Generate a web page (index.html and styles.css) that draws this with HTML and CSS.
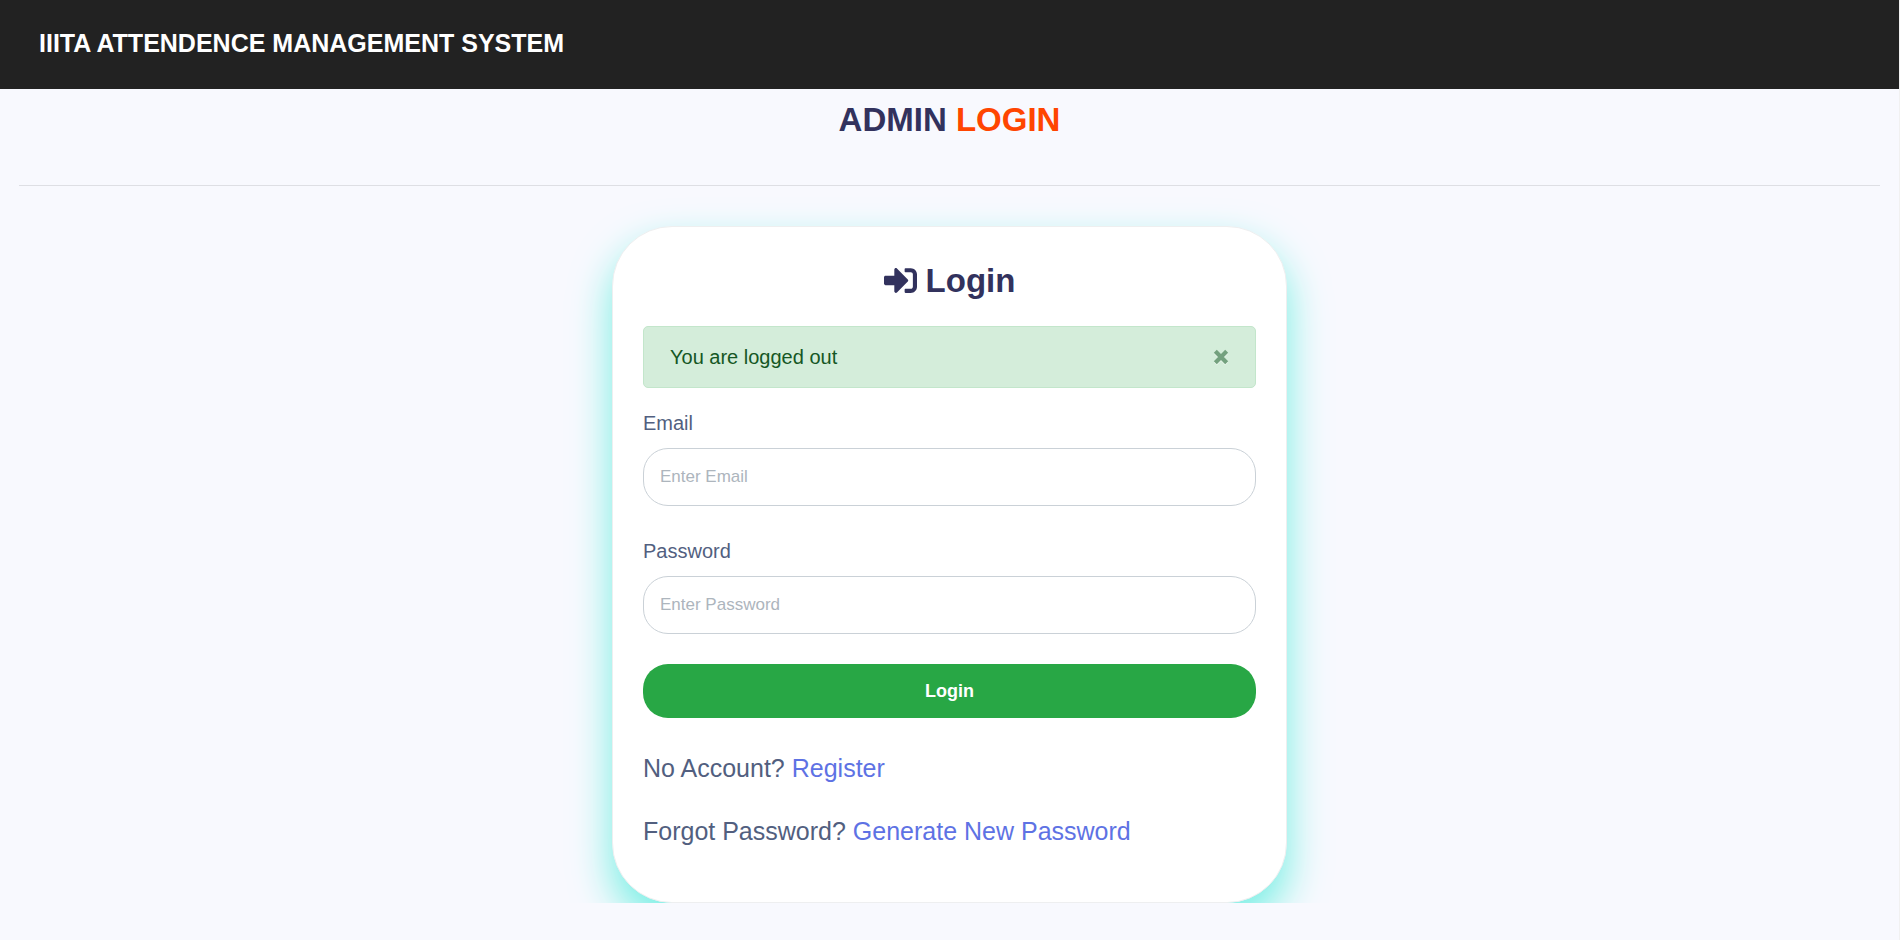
FILE: index.html
```html
<!DOCTYPE html>
<html lang="en">
<head>
<meta charset="utf-8">
<title>Admin Login</title>
<link rel="stylesheet" href="styles.css">
</head>
<body>
<header class="navbar">
  <a class="brand" href="#">IIITA ATTENDENCE MANAGEMENT SYSTEM</a>
</header>
<main class="page">
  <h1 class="page-title">ADMIN <span class="accent">LOGIN</span></h1>
  <hr class="divider">
  <section class="login-area">
    <div class="card">
      <h2 class="card-title">
        <svg class="title-icon" viewBox="0 0 512 512" aria-hidden="true"><path fill="currentColor" d="M416 448h-84c-6.600 0-12-5.400-12-12v-40c0-6.600 5.400-12 12-12h84c17.700 0 32-14.300 32-32V160c0-17.700-14.300-32-32-32h-84c-6.600 0-12-5.400-12-12V76c0-6.600 5.400-12 12-12h84c53 0 96 43 96 96v192c0 53-43 96-96 96zm-47-209L201 71c-15-15-41-4.500-41 17v96H24c-13.300 0-24 10.700-24 24v96c0 13.300 10.700 24 24 24h136v96c0 21.500 26 32 41 17l168-168c9.300-9.400 9.300-24.600 0-34z"/></svg>
        Login
      </h2>
      <div class="alert" role="alert">
        <span>You are logged out</span>
        <button class="alert-close" type="button" aria-label="Close">
          <svg class="close-icon" viewBox="0 0 16 16" aria-hidden="true"><path d="M2.300 2.300L13.700 13.700M13.700 2.300L2.300 13.700" fill="none" stroke="currentColor" stroke-width="4.200"/></svg>
        </button>
      </div>
      <form class="login-form">
        <div class="field">
          <label class="field-label" for="email">Email</label>
          <input class="field-input" id="email" type="email" placeholder="Enter Email">
        </div>
        <div class="field">
          <label class="field-label" for="password">Password</label>
          <input class="field-input" id="password" type="password" placeholder="Enter Password">
        </div>
        <button class="submit" type="submit">Login</button>
      </form>
      <p class="note">No Account? <a class="link" href="#">Register</a></p>
      <p class="note">Forgot Password? <a class="link" href="#">Generate New Password</a></p>
    </div>
  </section>
</main>
</body>
</html>
```
FILE: styles.css
```css
* {
  box-sizing: border-box;
}

body {
  margin: 0;
  min-height: 100vh;
  border-right: 1px solid #f1f1f1;
  background: #f8f9fe;
  color: #525f7f;
  font-family: "Liberation Sans", Arial, sans-serif;
  font-size: 20px;
  line-height: 30px;
}

.navbar {
  display: flex;
  align-items: center;
  padding: 24px 39px 27px;
  background: #222;
}

.brand {
  color: #fff;
  font-size: 25px;
  font-weight: 700;
  line-height: 38px;
  text-decoration: none;
}

.page {
  padding: 0 19px;
}

.page-title {
  margin: 0;
  padding: 6px 0 40px;
  color: #32325d;
  font-size: 33px;
  line-height: 50px;
  text-align: center;
}

.accent {
  color: #ff4500;
}

.divider {
  height: 1px;
  margin: 0;
  border: 0;
  background: #dedfe4;
}

.login-area {
  padding: 40px 0 0;
  overflow: hidden;
}

.card {
  max-width: 675px;
  margin: 0 auto;
  padding: 30px;
  border: 1px solid #eeeff0;
  border-radius: 60px;
  background: #fff;
  box-shadow: 0 20px 40px #74efe3;
}

.card-title {
  display: flex;
  align-items: center;
  justify-content: center;
  gap: 9px;
  margin: 0 0 22px;
  color: #32325d;
  font-size: 33px;
  line-height: 47px;
}

.title-icon {
  width: 33px;
  height: 33px;
}

.alert {
  display: flex;
  align-items: center;
  justify-content: space-between;
  padding: 15px 26px;
  border: 1px solid #c3e6cb;
  border-radius: 5px;
  background: #d4edda;
  color: #155724;
}

.alert-close {
  display: flex;
  padding: 0;
  border: 0;
  background: none;
  color: #155724;
  opacity: 0.5;
}

.close-icon {
  width: 16px;
  height: 16px;
  filter: drop-shadow(0 1px 0 #fff);
}

.login-form {
  display: grid;
  gap: 30px;
  padding-top: 20px;
}

.field {
  display: grid;
  gap: 10px;
}

.field-input {
  width: 100%;
  height: 58px;
  padding: 0 16px;
  border: 1px solid #cad1d7;
  border-radius: 25px;
  background: #fff;
  color: #525f7f;
  font: 17px/26px "Liberation Sans", Arial, sans-serif;
}

.field-input::placeholder {
  color: #adb5bd;
  opacity: 1;
}

.submit {
  height: 54px;
  border: 0;
  border-radius: 25px;
  background: #28a745;
  color: #fff;
  font: 700 18px/26px "Liberation Sans", Arial, sans-serif;
}

.note {
  margin: 31px 0 0;
  font-size: 25px;
  line-height: 38px;
}

.note + .note {
  margin: 25px 0 22px;
}

.link {
  color: #5e72e4;
  text-decoration: none;
}
```
